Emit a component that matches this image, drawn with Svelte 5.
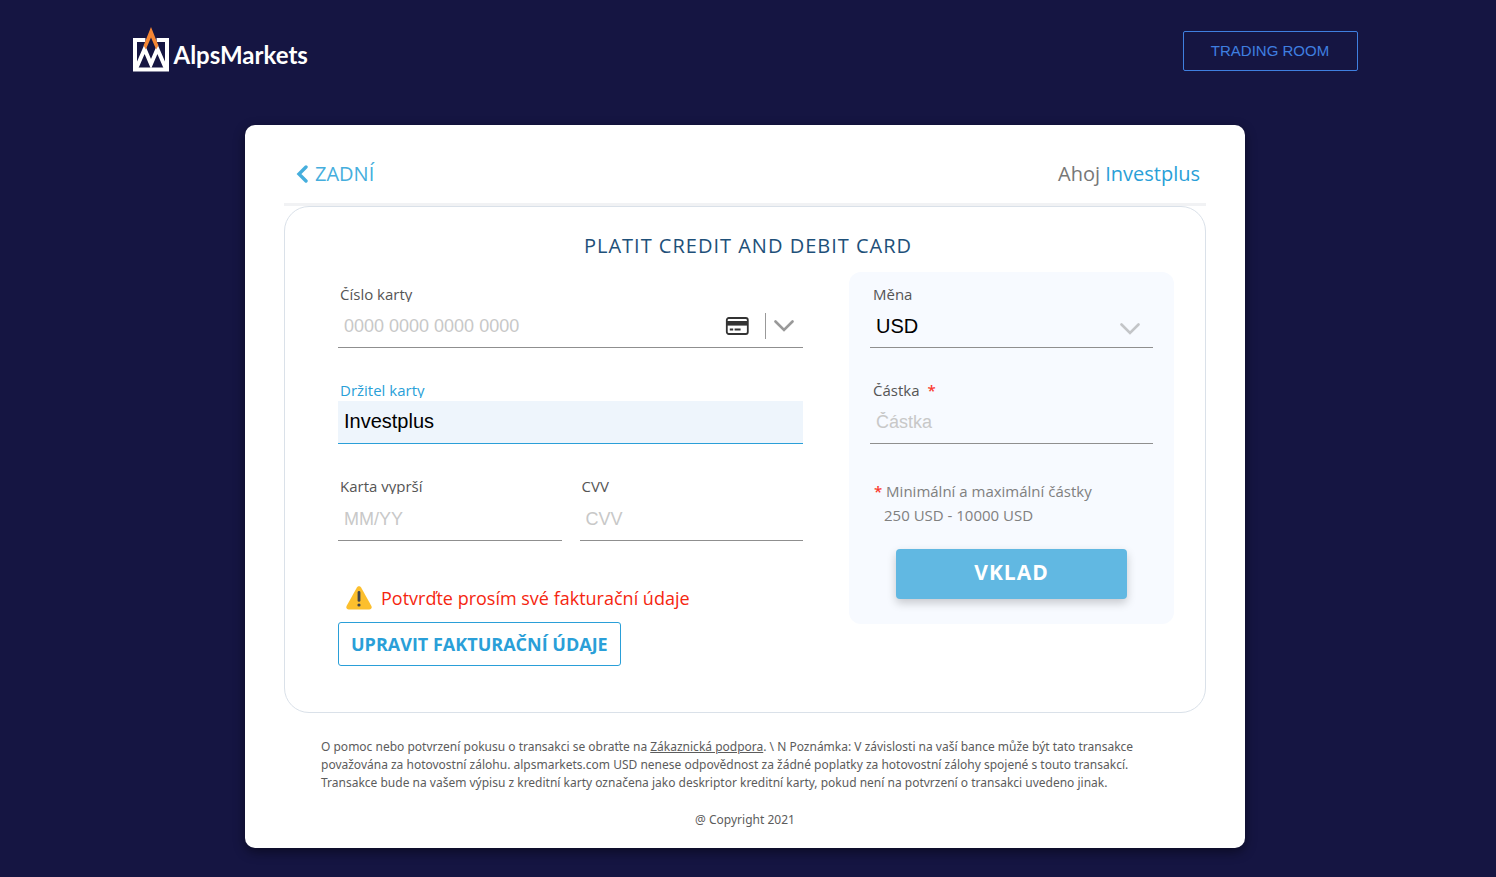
<script>
  let cardNumber = $state('');
  let holder = $state('Investplus');
  let expiry = $state('');
  let cvv = $state('');
  let currency = $state('USD');
  let amount = $state('');
</script>

<div class="page">
  <header class="top">
    <a class="logo" href="#home" aria-label="AlpsMarkets">
      <svg width="37" height="48" viewBox="0 0 37 48" aria-hidden="true">
        <path d="M12.4 13 H2 V42.6 H34 V13 H23.6" fill="none" stroke="#fff" stroke-width="4" />
        <path d="M3.4 41 L11.6 22 L18 37 L24.4 22 L32.6 41" fill="none" stroke="#fff" stroke-width="4" />
        <path d="M18 0 L25.4 18.4 L23.2 22.4 L18 10.4 L12.8 22.4 L10.6 18.4 Z" fill="#f58634" />
      </svg>
      <span>AlpsMarkets</span>
    </a>
    <a class="room" href="#trading">TRADING ROOM</a>
  </header>

  <main class="card">
    <div class="bar">
      <a class="back" href="#back">
        <svg width="12" height="18" viewBox="0 0 12 18" aria-hidden="true">
          <path d="M10 2 L3 9 L10 16" fill="none" stroke="#45aedd" stroke-width="3.4" stroke-linecap="round" />
        </svg>
        ZADNÍ
      </a>
      <div class="hello">Ahoj <span>Investplus</span></div>
    </div>

    <form class="box" onsubmit={(e) => e.preventDefault()}>
      <h1>PLATIT CREDIT AND DEBIT CARD</h1>
      <div class="cols">
        <div class="left">
          <div class="field">
            <label for="number">Číslo karty</label>
            <div class="control">
              <input id="number" placeholder="0000 0000 0000 0000" bind:value={cardNumber} />
              <svg class="cardicon" width="24" height="19" viewBox="0 0 24 19" aria-hidden="true">
                <rect x="1.8" y="1" width="21" height="16" rx="2" fill="none" stroke="#333" stroke-width="1.8" />
                <path d="M1.8 4h21v4.6h-21z" fill="#333" />
                <path d="M4.8 12.6h3.4M9.6 12.6h6" stroke="#333" stroke-width="2" />
              </svg>
              <button type="button" class="pick" aria-label="Uložené karty">
                <svg width="20" height="12" viewBox="0 0 20 12" aria-hidden="true">
                  <path d="M1.5 1.5 L10 10 L18.5 1.5" fill="none" stroke="#999" stroke-width="2.6" stroke-linecap="round" />
                </svg>
              </button>
            </div>
          </div>

          <div class="field active">
            <label for="holder">Držitel karty</label>
            <div class="control"><input id="holder" bind:value={holder} /></div>
          </div>

          <div class="pair">
            <div class="field">
              <label for="expiry">Karta vyprší</label>
              <div class="control"><input id="expiry" placeholder="MM/YY" bind:value={expiry} /></div>
            </div>
            <div class="field">
              <label for="cvv">CVV</label>
              <div class="control"><input id="cvv" placeholder="CVV" bind:value={cvv} /></div>
            </div>
          </div>

          <div class="billing">
            <p class="warn">
              <svg width="26" height="24" viewBox="0 0 26 24" aria-hidden="true">
                <path d="M10.9 1.4 C11.8 -0.2 14.2 -0.2 15.1 1.4 L25.4 20 C26.3 21.8 25.3 23.4 23.2 23.4 H2.8 C0.7 23.4 -0.3 21.8 0.6 20 Z" fill="#fcbf2d" />
                <path d="M13 6.4 V14.4" stroke="#40434a" stroke-width="2.8" stroke-linecap="round" />
                <circle cx="13" cy="19" r="1.6" fill="#40434a" />
              </svg>
              Potvrďte prosím své fakturační údaje
            </p>
            <button type="button" class="edit">UPRAVIT FAKTURAČNÍ ÚDAJE</button>
          </div>
        </div>

        <div class="panel">
          <div class="field">
            <label for="currency">Měna</label>
            <div class="control">
              <select id="currency" bind:value={currency}>
                <option>USD</option>
                <option>EUR</option>
              </select>
              <svg class="arrow" width="20" height="12" viewBox="0 0 20 12" aria-hidden="true">
                <path d="M1.5 1.5 L10 10 L18.5 1.5" fill="none" stroke="#c3c5c8" stroke-width="2.6" stroke-linecap="round" />
              </svg>
            </div>
          </div>
          <div class="field">
            <label for="amount">Částka <b>*</b></label>
            <div class="control"><input id="amount" placeholder="Částka" bind:value={amount} /></div>
          </div>
          <p class="limits">
            <b>*</b> Minimální a maximální částky
            <span>250 USD - 10000 USD</span>
          </p>
          <button class="submit">VKLAD</button>
        </div>
      </div>
    </form>

    <footer>
      <p>
        O pomoc nebo potvrzení pokusu o transakci se obraťte na <a href="#support">Zákaznická podpora</a>. \ N
        Poznámka: V závislosti na vaší bance může být tato transakce považována za hotovostní zálohu.
        alpsmarkets.com USD nenese odpovědnost za žádné poplatky za hotovostní zálohy spojené s touto transakcí.
        Transakce bude na vašem výpisu z kreditní karty označena jako deskriptor kreditní karty, pokud není na
        potvrzení o transakci uvedeno jinak.
      </p>
      <p class="copy">@ Copyright 2021</p>
    </footer>
  </main>
</div>

<style>
  :global(body) {
    background: #151542;
  }
  .page {
    padding: 0 6px 29px 0;
    font-family: 'Open Sans', sans-serif;
    color: #555;
  }
  .page :global(*) {
    box-sizing: border-box;
  }
  p,
  h1 {
    margin: 0;
  }
  svg {
    flex: none;
    display: block;
  }
  .top {
    display: flex;
    justify-content: space-between;
    align-items: center;
    max-width: 1225px;
    margin: 0 auto;
    padding: 27px 0 50px;
  }
  .logo {
    display: flex;
    gap: 4px;
    align-items: center;
    text-decoration: none;
    color: #fff;
    font: 700 24px/48px Lato, sans-serif;
  }
  .logo span {
    padding-top: 8px;
    line-height: 40px;
  }
  .room {
    width: 175px;
    border: 1px solid #3f7fe0;
    border-radius: 2px;
    color: #3f7fe0;
    text-align: center;
    text-decoration: none;
    font: 15px/38px 'Liberation Sans', sans-serif;
  }
  .card {
    max-width: 1000px;
    margin: 0 auto;
    padding: 23px 39px 19px;
    border-radius: 10px;
    background: #fff;
    box-shadow: 0 4px 12px rgba(0, 0, 0, 0.45);
  }
  .bar {
    display: flex;
    justify-content: space-between;
    padding: 8px 6px 12px 12px;
    border-bottom: 3px solid #f1f2f4;
    font-size: 20px;
    line-height: 35px;
    color: #777;
  }
  .back {
    display: flex;
    align-items: center;
    gap: 7px;
    color: #45aedd;
    text-decoration: none;
  }
  .hello span {
    color: #2a9fd8;
  }
  .box {
    border: 1px solid #dae1e9;
    border-radius: 25px;
    padding: 24px 31px 46px 53px;
  }
  h1 {
    margin-bottom: 11px;
    padding-right: 16px;
    color: #1e5079;
    font-size: 20px;
    font-weight: 400;
    line-height: 30px;
    letter-spacing: 1px;
    text-align: center;
  }
  .cols {
    display: grid;
    grid-template-columns: minmax(0, 465fr) minmax(0, 325fr);
    gap: 46px;
    align-items: start;
  }
  .left {
    display: flex;
    flex-direction: column;
    gap: 35px;
    padding-top: 15px;
  }
  .pair {
    display: grid;
    grid-template-columns: 1fr 1fr;
    gap: 18px;
  }
  .field {
    display: flex;
    flex-direction: column;
    gap: 3px;
  }
  .pair .field {
    gap: 4px;
  }
  label {
    height: 15px;
    padding-left: 2px;
    overflow: hidden;
    font-size: 15px;
    line-height: 15px;
  }
  b {
    color: #fb3a2f;
    font-weight: 600;
  }
  label b {
    margin-left: 4px;
  }
  .control {
    display: flex;
    align-items: center;
    height: 43px;
    border-bottom: 1px solid #8f8f8f;
  }
  input,
  select {
    flex: 1;
    min-width: 0;
    width: 100%;
    height: 42px;
    padding: 0 6px;
    border: 0;
    outline: 0;
    border-radius: 0;
    background: transparent;
    appearance: none;
    color: #000;
    font: 20px 'Liberation Sans', sans-serif;
  }
  input {
    padding-bottom: 2px;
  }
  input::placeholder {
    color: #c8c8c8;
    font-size: 18px;
  }
  .active label {
    color: #2a9fd8;
  }
  .active .control {
    border-color: #2a9fd8;
    background: #eef5fc;
  }
  .cardicon {
    margin-right: 16px;
  }
  .pick {
    height: 26px;
    margin-right: 9px;
    padding: 0 0 0 8px;
    border: 0;
    border-left: 1px solid #999;
    background: none;
  }
  .arrow {
    margin: 6px 13px 0 0;
    pointer-events: none;
  }
  .billing {
    padding-top: 7px;
  }
  .warn {
    display: flex;
    align-items: center;
    gap: 9px;
    margin-bottom: 9px;
    padding-left: 8px;
    color: #f5260f;
    font-size: 18px;
    line-height: 30px;
  }
  .edit {
    height: 44px;
    padding: 0 12px;
    border: 1px solid #2a9fd8;
    border-radius: 3px;
    background: #fff;
    color: #2a9fd8;
    font: 700 18px 'Open Sans', sans-serif;
  }
  .panel {
    display: flex;
    flex-direction: column;
    gap: 35px;
    padding: 15px 21px 25px;
    border-radius: 12px;
    background: #f7faff;
  }
  .panel label {
    padding-left: 3px;
  }
  .limits {
    padding-left: 4px;
    color: #808080;
    font-size: 15px;
    line-height: 24px;
  }
  .limits span {
    display: block;
    padding-left: 10px;
  }
  .submit {
    align-self: center;
    width: 231px;
    height: 50px;
    margin-top: -13px;
    padding: 0 0 4px;
    border: 0;
    border-radius: 4px;
    background: #61b8e2;
    box-shadow: 0 4px 10px rgba(0, 0, 0, 0.2);
    color: #fff;
    font: 700 21px 'Open Sans', sans-serif;
    letter-spacing: 1px;
  }
  footer {
    padding: 25px 37px 0;
    font: 12px/18px 'Noto Sans', sans-serif;
    color: #5c5c5c;
  }
  footer a {
    color: inherit;
  }
  .copy {
    margin-top: 19px;
    text-align: center;
  }
</style>
